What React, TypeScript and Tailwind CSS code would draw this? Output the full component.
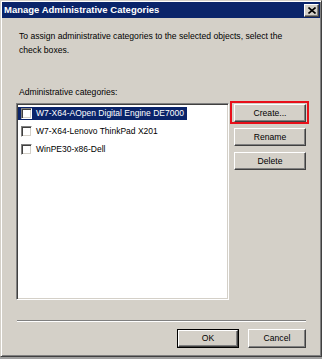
import React from "react";

const raised =
  "border border-t-white border-l-white border-r-[#404040] border-b-[#404040] shadow-[inset_-1px_-1px_0_#808080]";

function Btn({ label, className = "" }: { label: string; className?: string }) {
  return (
    <div
      className={`flex items-center justify-center bg-[#d4d0c8] text-[8.6px] text-black ${raised} ${className}`}
    >
      {label}
    </div>
  );
}

function Check() {
  return (
    <div className="w-[11px] h-[11px] shrink-0 bg-white border border-t-[#808080] border-l-[#808080] border-r-white border-b-white shadow-[inset_1px_1px_0_#404040,inset_-1px_-1px_0_#d4d0c8]" />
  );
}

function Row({ label, selected }: { label: string; selected?: boolean }) {
  return (
    <div className="h-[13px] flex">
      <div
        className={`flex items-center gap-[4px] pl-[3px] pr-[3px] h-full ${
          selected ? "bg-[#0a246a] text-white" : "text-black"
        }`}
      >
        <Check />
        <span className="text-[8.5px] leading-none whitespace-nowrap">{label}</span>
      </div>
    </div>
  );
}

export default function App() {
  return (
    <div className="w-[322px] h-[359px] bg-[#a0a0a0] font-['Liberation_Sans',Arial,sans-serif]">
      <div className="w-[322px] h-[357px] bg-[#d4d0c8] p-[1px] border border-t-[#d4d0c8] border-l-[#d4d0c8] border-r-[#404040] border-b-[#404040] shadow-[inset_1px_1px_0_#ffffff,inset_-1px_-1px_0_#808080]">
        <div className="h-[16px] bg-[#0a246a] flex items-center justify-between pl-[2px] pr-[1px]">
          <span className="text-white font-bold text-[9.5px] leading-none whitespace-nowrap">
            Manage Administrative Categories
          </span>
          <div className={`w-[15px] h-[13px] bg-[#d4d0c8] flex items-center justify-center ${raised}`}>
            <svg width="8" height="7" viewBox="0 0 8 7">
              <path d="M0.5 0.5 L7.5 6.5 M7.5 0.5 L0.5 6.5" stroke="#000" strokeWidth="1.6" />
            </svg>
          </div>
        </div>
        <div className="px-[14px]">
          <div className="pl-[3px] pt-[11px] text-[8.6px] leading-[14px] text-black whitespace-nowrap">
            <div>To assign administrative categories to the selected objects, select the</div>
            <div>check boxes.</div>
          </div>
          <div className="pl-[3px] mt-[28px] text-[8.6px] leading-[14px] text-black">
            Administrative categories:
          </div>
          <div className="flex gap-[5px] mt-[4px]">
            <div className="w-[213px] h-[197px] bg-white border border-t-[#808080] border-l-[#808080] border-r-white border-b-white shadow-[inset_1px_1px_0_#404040,inset_-1px_-1px_0_#d4d0c8] p-[1px]">
              <div className="flex flex-col gap-[5px] pt-[2px]">
                <Row label="W7-X64-AOpen Digital Engine DE7000" selected />
                <Row label="W7-X64-Lenovo ThinkPad X201" />
                <Row label="WinPE30-x86-Dell" />
              </div>
            </div>
            <div className="w-[72px] mt-[1px] flex flex-col gap-[6px]">
              <div className="relative">
                <Btn label="Create..." className="h-[18px]" />
                <div className="absolute -left-[4px] -right-[3px] -top-[3px] -bottom-[2px] border-2 border-[#e8101a]" />
              </div>
              <Btn label="Rename" className="h-[18px]" />
              <Btn label="Delete" className="h-[18px]" />
            </div>
          </div>
          <div className="mt-[20px] ml-[1px] h-[2px] border-t border-t-[#808080] border-b border-b-white" />
          <div className="flex justify-end gap-[9px] mt-[7px]">
            <div className="w-[62px] h-[19px] border border-black">
              <Btn label="OK" className="h-full w-full" />
            </div>
            <Btn label="Cancel" className="w-[58px] h-[19px]" />
          </div>
        </div>
      </div>
    </div>
  );
}
